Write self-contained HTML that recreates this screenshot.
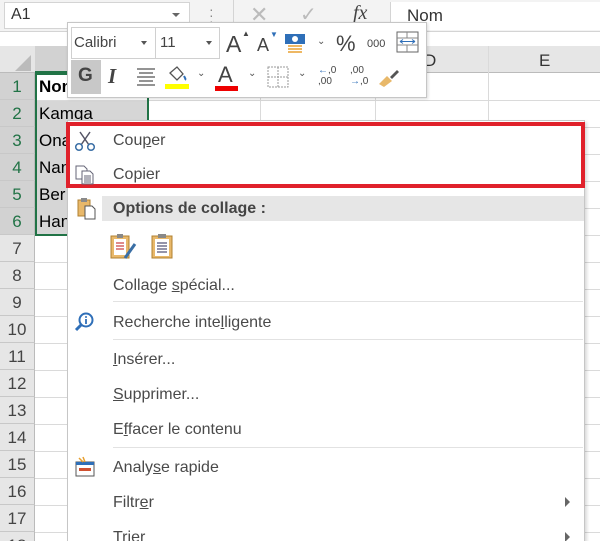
<!DOCTYPE html>
<html><head><meta charset="utf-8"><style>
*{margin:0;padding:0;box-sizing:border-box}
html,body{width:600px;height:541px;overflow:hidden}
body{background:#fff;font-family:"Liberation Sans",sans-serif;position:relative}
.a{position:absolute}
.t{font-size:15px;color:#444;white-space:nowrap}
.rh{position:absolute;left:0;width:35px;height:27px;background:#e6e6e6;border-bottom:1px solid #c8c8c8;border-right:1px solid #bbb;text-align:center;font-size:17px;color:#444;line-height:27px}
.cell{position:absolute;left:35px;font-size:17px;color:#000;line-height:27px}
.hl{position:absolute;left:35px;right:0;height:1px;background:#dadada}
.vl{position:absolute;top:46px;bottom:0;width:1px;background:#dadada}
.mi{position:absolute;left:113px;font-size:16px;color:#4a4a4a;white-space:nowrap}
.sep{position:absolute;left:113px;width:470px;height:1px;background:#e2e2e2}
u{text-decoration:underline}
</style></head><body>
<div class="a" style="left:0;top:0;width:600px;height:32px;background:#f3f3f3;border-bottom:1px solid #d4d4d4"></div>
<div class="a" style="left:4px;top:2px;width:186px;height:27px;background:#fff;border:1px solid #d4d4d4"></div>
<div class="a t" style="left:11px;top:6px;font-size:16px;color:#333">A1</div>
<div class="a" style="left:172px;top:13px;border-left:4px solid transparent;border-right:4px solid transparent;border-top:4px solid #666"></div>
<div class="a" style="left:209px;top:6px;color:#888;font-size:14px;line-height:6px">·<br>·<br>·</div>
<div class="a" style="left:233px;top:0;width:1px;height:30px;background:#d4d4d4"></div>
<div class="a" style="left:250px;top:2px;font-size:22px;color:#bbb">✕</div>
<div class="a" style="left:300px;top:2px;font-size:20px;color:#bbb">✓</div>
<div class="a" style="left:353px;top:2px;font-size:20px;color:#444;font-style:italic;font-family:'Liberation Serif',serif">fx</div>
<div class="a" style="left:390px;top:2px;width:210px;height:28px;background:#fff;border-left:1px solid #d4d4d4"></div>
<div class="a t" style="left:407px;top:6px;font-size:17px;color:#333">Nom</div>
<div class="a" style="left:0;top:32px;width:600px;height:41px;background:#fff"></div>
<div class="a" style="left:0;top:46px;width:600px;height:27px;background:#e6e6e6;border-bottom:1px solid #bbb"></div>
<div class="a" style="left:15px;top:55px;border-left:16px solid transparent;border-bottom:16px solid #bbb"></div>
<div class="a" style="left:35px;top:46px;width:113px;height:27px;background:#d2d2d2;border-bottom:2px solid #217346"></div>
<div class="a t" style="left:424px;top:51px;font-size:17px;color:#333">D</div>
<div class="a t" style="left:539px;top:51px;font-size:17px;color:#333">E</div>
<div class="vl" style="left:148px"></div><div class="vl" style="left:260px"></div><div class="vl" style="left:375px"></div><div class="vl" style="left:488px"></div>
<div class="rh" style="top:73px;background:#d2d2d2;color:#217346">1</div>
<div class="rh" style="top:100px;background:#d2d2d2;color:#217346">2</div>
<div class="rh" style="top:127px;background:#d2d2d2;color:#217346">3</div>
<div class="rh" style="top:154px;background:#d2d2d2;color:#217346">4</div>
<div class="rh" style="top:181px;background:#d2d2d2;color:#217346">5</div>
<div class="rh" style="top:208px;background:#d2d2d2;color:#217346">6</div>
<div class="rh" style="top:235px">7</div><div class="rh" style="top:262px">8</div><div class="rh" style="top:289px">9</div><div class="rh" style="top:316px">10</div><div class="rh" style="top:343px">11</div><div class="rh" style="top:370px">12</div><div class="rh" style="top:397px">13</div><div class="rh" style="top:424px">14</div><div class="rh" style="top:451px">15</div><div class="rh" style="top:478px">16</div><div class="rh" style="top:505px">17</div><div class="rh" style="top:532px">18</div>
<div class="hl" style="top:100px"></div><div class="hl" style="top:127px"></div><div class="hl" style="top:154px"></div><div class="hl" style="top:181px"></div><div class="hl" style="top:208px"></div><div class="hl" style="top:235px"></div>
<div class="hl" style="top:262px"></div><div class="hl" style="top:289px"></div><div class="hl" style="top:316px"></div><div class="hl" style="top:343px"></div><div class="hl" style="top:370px"></div><div class="hl" style="top:397px"></div><div class="hl" style="top:424px"></div><div class="hl" style="top:451px"></div><div class="hl" style="top:478px"></div><div class="hl" style="top:505px"></div><div class="hl" style="top:532px"></div>
<div class="a" style="left:36px;top:101px;width:112px;height:134px;background:#d6d6d6"></div>
<div class="a" style="left:35px;top:73px;width:114px;height:163px;border:2px solid #217346"></div>
<div class="cell" style="top:73px;font-weight:bold;left:39px">Nom</div>
<div class="cell" style="top:100px;left:39px">Kamga</div>
<div class="cell" style="top:127px;left:39px">Ona</div>
<div class="cell" style="top:154px;left:39px">Nan</div>
<div class="cell" style="top:181px;left:39px">Ber</div>
<div class="cell" style="top:208px;left:39px">Han</div>
<div class="a" style="left:67px;top:120px;width:518px;height:430px;background:#fff;border:1px solid #c6c6c6;box-shadow:2px 2px 3px rgba(0,0,0,.15)"></div>
<div class="a" style="left:66px;top:122px;width:519px;height:66px;border:4px solid #e0212b"></div>
<svg class="a" style="left:74px;top:130px" width="22" height="22" viewBox="0 0 22 22"><g fill="none" stroke="#556" stroke-width="1.5"><line x1="6" y1="2" x2="15" y2="15"/><line x1="16" y1="2" x2="7" y2="15"/><circle cx="5" cy="17" r="3.3" stroke="#3a6ea5"/><circle cx="17" cy="17" r="3.3" stroke="#3a6ea5"/></g></svg>
<div class="mi" style="top:132px">Cou<u>p</u>er</div>
<svg class="a" style="left:74px;top:164px" width="22" height="22" viewBox="0 0 22 22"><g fill="#fff" stroke="#667" stroke-width="1"><path d="M2 2h8l3 3v10H2z"/><path d="M8 7h8l3 3v10H8z"/><path d="M10 12h7M10 14h7M10 16h7M10 18h7"/></g></svg>
<div class="mi" style="top:166px">Copier</div>
<div class="a" style="left:102px;top:196px;width:482px;height:25px;background:#e6e6e6"></div>
<svg class="a" style="left:75px;top:197px" width="24" height="24" viewBox="0 0 24 24"><rect x="3" y="3" width="12" height="16" fill="#e8b86a" stroke="#b08030"/><rect x="6" y="1" width="6" height="4" fill="#8a8a8a"/><path d="M10 9h7l3 3v10H10z" fill="#fff" stroke="#555"/></svg>
<div class="mi" style="top:200px;font-weight:bold;color:#444">Options de collage :</div>
<svg class="a" style="left:109px;top:232px" width="32" height="30" viewBox="0 0 32 30"><rect x="2" y="4" width="18" height="22" fill="#e8b86a" stroke="#b08030"/><rect x="5" y="7" width="12" height="16" fill="#fff"/><path d="M7 11h8M7 14h8M7 17h8" stroke="#c44" stroke-width="1.3"/><rect x="8" y="2" width="6" height="4" fill="#888"/><path d="M26 12L16 26" stroke="#3a6ea5" stroke-width="3"/></svg>
<svg class="a" style="left:150px;top:232px" width="26" height="30" viewBox="0 0 26 30"><rect x="2" y="4" width="20" height="22" fill="#e8b86a" stroke="#b08030"/><rect x="5" y="7" width="14" height="17" fill="#fff"/><path d="M7 11h10M7 14h10M7 17h10M7 20h10" stroke="#557" stroke-width="1.2"/><rect x="8" y="2" width="8" height="4" fill="#888"/></svg>
<div class="mi" style="top:277px">Collage <u>s</u>pécial...</div>
<div class="sep" style="top:301px"></div>
<svg class="a" style="left:74px;top:311px" width="22" height="22" viewBox="0 0 22 22"><circle cx="12" cy="9" r="6.5" fill="#fff" stroke="#2f6fb8" stroke-width="2"/><path d="M7.5 13.5L2 19" stroke="#2f6fb8" stroke-width="3"/><circle cx="12" cy="6" r="1" fill="#2f6fb8"/><path d="M12 8v5" stroke="#2f6fb8" stroke-width="1.8"/></svg>
<div class="mi" style="top:314px">Recherche inte<u>l</u>ligente</div>
<div class="sep" style="top:339px"></div>
<div class="mi" style="top:351px"><u>I</u>nsérer...</div>
<div class="mi" style="top:386px"><u>S</u>upprimer...</div>
<div class="mi" style="top:421px">E<u>f</u>facer le contenu</div>
<div class="sep" style="top:447px"></div>
<svg class="a" style="left:74px;top:456px" width="22" height="22" viewBox="0 0 22 22"><rect x="2" y="6" width="18" height="14" fill="#fff" stroke="#555"/><rect x="2" y="6" width="18" height="3" fill="#2f6fb8"/><rect x="5" y="12" width="12" height="3" fill="#d05030"/><path d="M5 2l4 4M9 1l2 5" stroke="#e8a030" stroke-width="1.5"/></svg>
<div class="mi" style="top:459px">Analy<u>s</u>e rapide</div>
<div class="mi" style="top:494px">Filtr<u>e</u>r</div>
<div class="a" style="left:565px;top:497px;border-top:5px solid transparent;border-bottom:5px solid transparent;border-left:5px solid #666"></div>
<div class="mi" style="top:529px">Trier</div>
<div class="a" style="left:565px;top:532px;border-top:5px solid transparent;border-bottom:5px solid transparent;border-left:5px solid #666"></div>
<div class="a" style="left:67px;top:22px;width:360px;height:76px;background:#fff;border:1px solid #c6c6c6;box-shadow:1px 1px 3px rgba(0,0,0,.15)"></div>
<div class="a" style="left:71px;top:27px;width:85px;height:32px;border:1px solid #d0d0d0"></div>
<div class="a t" style="left:74px;top:34px;color:#444">Calibri</div>
<div class="a" style="left:141px;top:41px;border-left:3.5px solid transparent;border-right:3.5px solid transparent;border-top:4px solid #555"></div>
<div class="a" style="left:155px;top:27px;width:65px;height:32px;border:1px solid #d0d0d0"></div>
<div class="a t" style="left:160px;top:34px;color:#444">11</div>
<div class="a" style="left:206px;top:41px;border-left:3.5px solid transparent;border-right:3.5px solid transparent;border-top:4px solid #555"></div>
<div class="a" style="left:226px;top:31px;font-size:23px;color:#444">A</div><div class="a" style="left:242px;top:29px;font-size:8px;color:#444">▲</div>
<div class="a" style="left:257px;top:35px;font-size:18px;color:#444">A</div><div class="a" style="left:270px;top:30px;font-size:8px;color:#2f6fb8">▼</div>
<svg class="a" style="left:284px;top:32px" width="24" height="22" viewBox="0 0 24 22"><rect x="1" y="2" width="20" height="10" fill="#2f6fb8"/><circle cx="11" cy="7" r="3" fill="#fff"/><path d="M4 14h14M4 17h14M4 20h14" stroke="#e8a030" stroke-width="1.5"/></svg>
<div class="a" style="left:317px;top:36px;font-size:10px;color:#555">⌄</div>
<div class="a" style="left:336px;top:31px;font-size:22px;color:#444">%</div>
<div class="a" style="left:367px;top:38px;font-size:11px;color:#444">000</div>
<svg class="a" style="left:396px;top:31px" width="24" height="22" viewBox="0 0 24 22"><rect x="1" y="1" width="21" height="20" fill="#fff" stroke="#666"/><path d="M1 7h21M1 14h21M11 1v6M11 14v7" stroke="#888"/><path d="M4 10.5h15M4 10.5l3-2M4 10.5l3 2M19 10.5l-3-2M19 10.5l-3 2" stroke="#2f6fb8"/></svg>
<div class="a" style="left:71px;top:60px;width:30px;height:34px;background:#c8c8c8"></div>
<div class="a" style="left:78px;top:65px;font-size:19px;font-weight:bold;color:#444">G</div>
<div class="a" style="left:108px;top:64px;font-size:21px;font-style:italic;font-family:'Liberation Serif',serif;color:#444;font-weight:bold">I</div>
<svg class="a" style="left:136px;top:67px" width="20" height="20" viewBox="0 0 20 20"><path d="M1 2h18M3 6h14M1 10h18M3 14h14M1 18h18" stroke="#555" stroke-width="1.2"/></svg>
<svg class="a" style="left:164px;top:64px" width="26" height="26" viewBox="0 0 26 26"><path d="M6 9l7-6 6 7-6 6z" fill="#fff" stroke="#555" stroke-width="1.3"/><path d="M20 12c1 2 2 3 1 4" stroke="#2f6fb8" stroke-width="2" fill="none"/><rect x="1" y="20" width="24" height="5" fill="#ffff00"/></svg>
<div class="a" style="left:197px;top:68px;font-size:10px;color:#555">⌄</div>
<div class="a" style="left:218px;top:62px;font-size:22px;color:#444">A</div>
<div class="a" style="left:215px;top:86px;width:23px;height:5px;background:#e00"></div>
<div class="a" style="left:248px;top:68px;font-size:10px;color:#555">⌄</div>
<svg class="a" style="left:267px;top:66px" width="22" height="22" viewBox="0 0 22 22"><rect x="1" y="1" width="20" height="20" fill="none" stroke="#999" stroke-dasharray="2 1"/><path d="M11 1v20M1 11h20" stroke="#999" stroke-dasharray="2 1"/></svg>
<div class="a" style="left:298px;top:68px;font-size:10px;color:#555">⌄</div>
<div class="a" style="left:318px;top:65px;font-size:10px;color:#444;line-height:11px"><span style="color:#2f6fb8">←</span>,0<br>,00</div>
<div class="a" style="left:350px;top:65px;font-size:10px;color:#444;line-height:11px">,00<br><span style="color:#2f6fb8">→</span>,0</div>
<svg class="a" style="left:377px;top:66px" width="24" height="22" viewBox="0 0 24 22"><path d="M2 18l8-8 5 5-8 6z" fill="#e8b86a"/><path d="M13 11l7-7 2 2-7 7z" fill="#555"/></svg>
</body></html>
